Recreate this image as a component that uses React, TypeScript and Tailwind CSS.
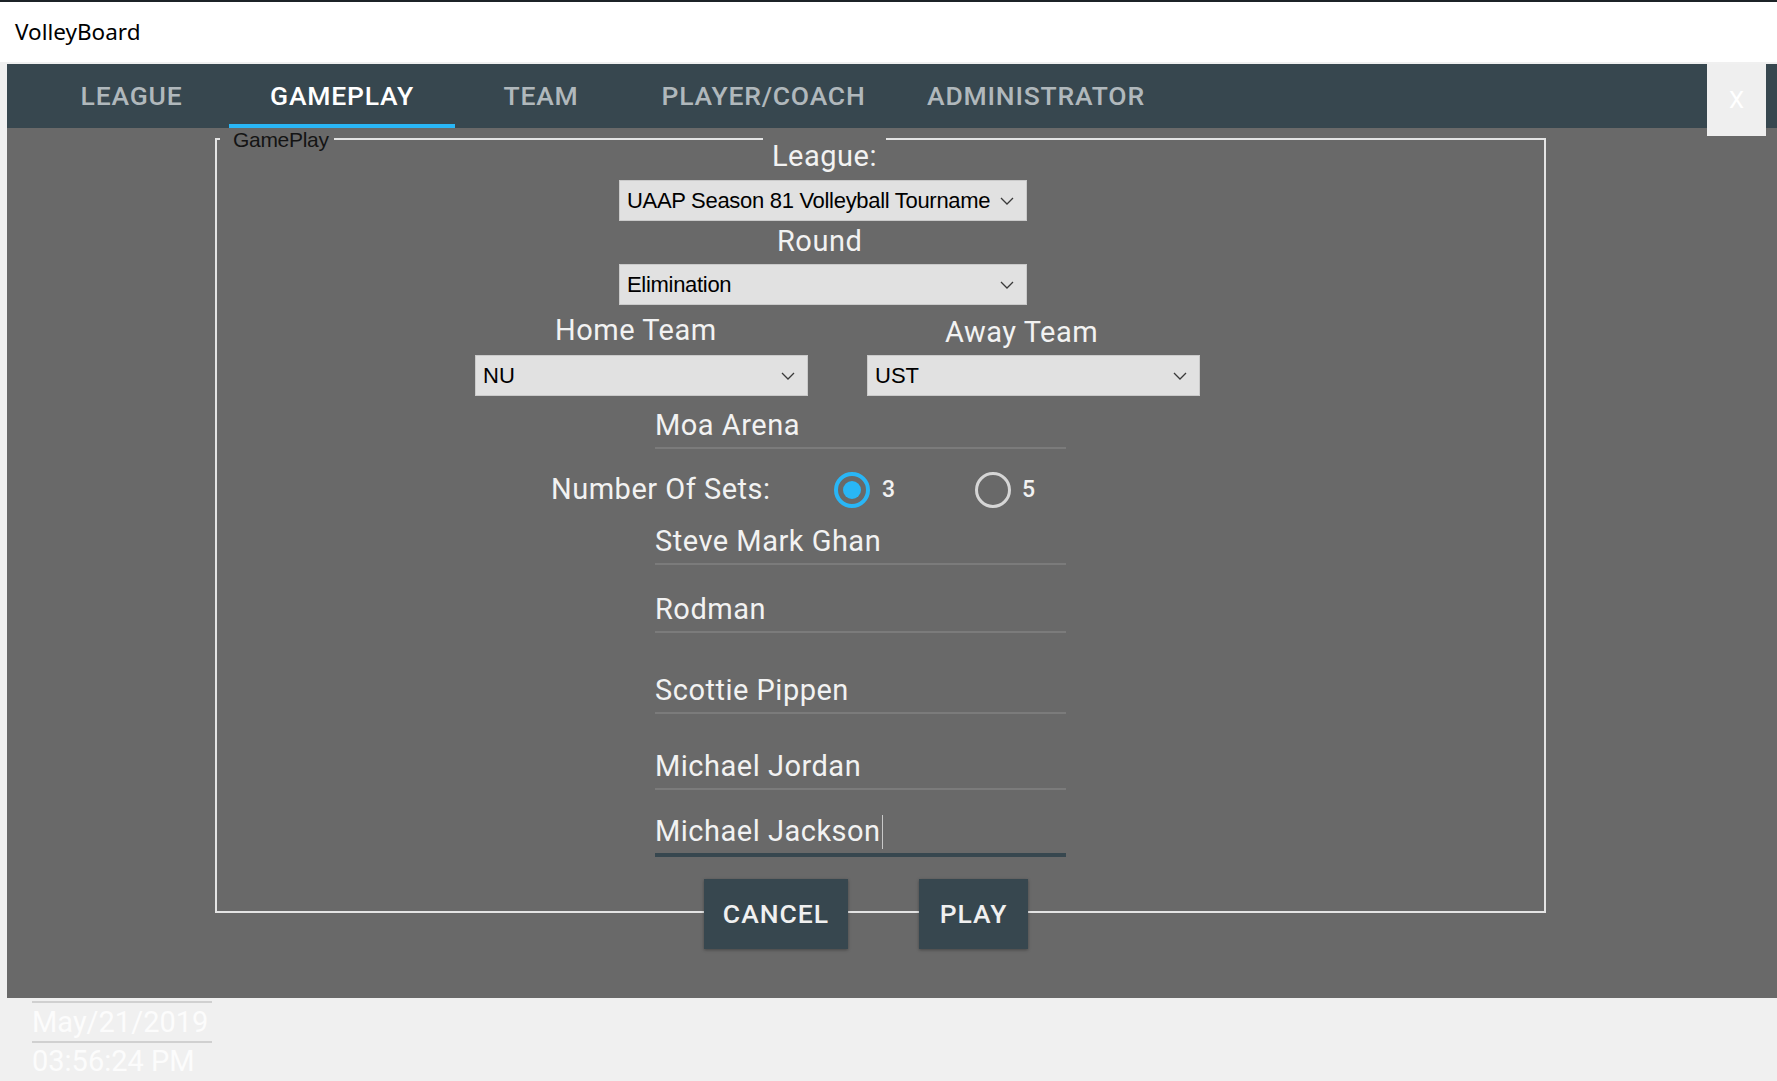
import React from "react";

function Chevron() {
  return (
    <svg width="14" height="8" viewBox="0 0 14 8" className="shrink-0">
      <path d="M1 1 L7 7 L13 1" fill="none" stroke="#3a3a3a" strokeWidth="1.3" />
    </svg>
  );
}

function Field({ text }: { text: string }) {
  return (
    <div className="ml-[438px] w-[411px] h-[45px] border-b-2 border-[#7b7b7b] text-[29px] tracking-[0.5px] leading-[43px] text-[#f2f2f2] whitespace-nowrap">
      {text}
    </div>
  );
}

export default function App() {
  const tabs = [
    { label: "LEAGUE", w: "w-[195px]", active: false },
    { label: "GAMEPLAY", w: "w-[226px]", active: true },
    { label: "TEAM", w: "w-[172px]", active: false },
    { label: "PLAYER/COACH", w: "w-[273px]", active: false },
    { label: "ADMINISTRATOR", w: "w-[272px]", active: false },
  ];
  return (
    <div className="w-[1777px] h-[1081px] bg-[#f0f0f0] flex flex-col overflow-hidden font-['Roboto',sans-serif]">
      <div className="h-[2px] bg-[#1c2327] shrink-0" />
      <div className="h-[60px] bg-white flex items-center pl-[15px] shrink-0">
        <span className="text-[22.5px] text-black font-['Noto_Sans',sans-serif]">VolleyBoard</span>
      </div>
      <div className="h-[2px] shrink-0" />
      <div className="ml-[7px] h-[934px] flex flex-col shrink-0 relative">
        <div className="h-[64px] bg-[#37474f] flex pl-[27px] shrink-0">
          {tabs.map((t) => (
            <div key={t.label} className={`${t.w} h-full relative flex items-center justify-center`}>
              <span
                className={`text-[26.5px] font-medium tracking-[0.8px] ${t.active ? "text-white" : "text-[#b0b8bc]"}`}
              >
                {t.label}
              </span>
              {t.active && <div className="absolute left-0 right-0 bottom-0 h-[4px] bg-[#29b6f6]" />}
            </div>
          ))}
        </div>
        <div className="absolute left-[1700px] top-0 w-[59px] h-[72px] bg-[#efefef] flex items-center justify-center text-white text-[24px]">
          X
        </div>
        <div className="flex-1 bg-[#696969] pt-[10px] pl-[208px]">
          <div className="relative w-[1331px] h-[775px] border-2 border-[#e4e4e4]">
            <div className="absolute left-[3px] top-[-12px] h-[24px] pl-[13px] pr-[5px] bg-[#696969] text-[21px] leading-[24px] text-[#141414] font-['Liberation_Sans',sans-serif] tracking-[-0.3px]">
              GamePlay
            </div>

            <div className="mt-[-7px] ml-[546px] w-[123px] h-[46px] pl-[9px] bg-[#696969] text-[29px] tracking-[0.5px] leading-[46px] text-[#f2f2f2]">
              League:
            </div>

            <div className="mt-[1px] ml-[402px] w-[408px] h-[41px] bg-[#e1e1e1] border border-[#cacaca] flex items-center justify-between pl-[7px] pr-[12px]">
              <span className="text-[22px] text-black font-['Liberation_Sans',sans-serif] whitespace-nowrap overflow-hidden tracking-[-0.3px]">
                UAAP Season 81 Volleyball Tourname
              </span>
              <Chevron />
            </div>

            <div className="mt-[3px] ml-[560px] h-[34px] text-[29px] tracking-[0.5px] leading-[34px] text-[#f2f2f2]">Round</div>

            <div className="mt-[6px] ml-[402px] w-[408px] h-[41px] bg-[#e1e1e1] border border-[#cacaca] flex items-center justify-between pl-[7px] pr-[12px]">
              <span className="text-[22px] text-black font-['Liberation_Sans',sans-serif] tracking-[-0.3px]">Elimination</span>
              <Chevron />
            </div>

            <div className="mt-[8px] flex">
              <div className="ml-[258px] flex flex-col">
                <div className="h-[34px] pl-[80px] text-[29px] tracking-[0.5px] leading-[34px] text-[#f2f2f2]">Home Team</div>
                <div className="mt-[8px] w-[333px] h-[41px] bg-[#e1e1e1] border border-[#cacaca] flex items-center justify-between pl-[7px] pr-[12px]">
                  <span className="text-[22px] text-black font-['Liberation_Sans',sans-serif]">NU</span>
                  <Chevron />
                </div>
              </div>
              <div className="ml-[59px] flex flex-col">
                <div className="mt-[2px] h-[34px] pl-[78px] text-[29px] tracking-[0.5px] leading-[34px] text-[#f2f2f2]">Away Team</div>
                <div className="mt-[6px] w-[333px] h-[41px] bg-[#e1e1e1] border border-[#cacaca] flex items-center justify-between pl-[7px] pr-[12px]">
                  <span className="text-[22px] text-black font-['Liberation_Sans',sans-serif]">UST</span>
                  <Chevron />
                </div>
              </div>
            </div>

            <div className="mt-[8px]">
              <Field text="Moa Arena" />
            </div>

            <div className="mt-[21px] ml-[334px] h-[40px] flex items-center">
              <span className="w-[283px] text-[29px] tracking-[0.5px] text-[#f2f2f2] whitespace-nowrap">Number Of Sets:</span>
              <div className="w-[36px] h-[36px] rounded-full border-[4px] border-[#29b6f6] flex items-center justify-center">
                <div className="w-[18px] h-[18px] rounded-full bg-[#29b6f6]" />
              </div>
              <span className="ml-[12px] w-[13px] text-[23px] font-medium text-[#f2f2f2]">3</span>
              <div className="ml-[80px] w-[36px] h-[36px] rounded-full border-[3px] border-[#d6d6d6]" />
              <span className="ml-[11px] text-[23px] font-medium text-[#f2f2f2]">5</span>
            </div>

            <div className="mt-[10px]">
              <Field text="Steve Mark Ghan" />
            </div>
            <div className="mt-[23px]">
              <Field text="Rodman" />
            </div>
            <div className="mt-[36px]">
              <Field text="Scottie Pippen" />
            </div>
            <div className="mt-[31px]">
              <Field text="Michael Jordan" />
            </div>
            <div className="mt-[20px] ml-[438px] w-[411px] h-[47px] border-b-4 border-[#37474f] text-[29px] tracking-[0.5px] leading-[43px] text-[#f2f2f2] flex items-center">
              <span>Michael Jackson</span>
              <span className="ml-[1px] w-[1px] h-[34px] bg-[#c8c8c8]" />
            </div>

            <div className="mt-[22px] flex">
              <div className="ml-[487px] w-[144px] h-[70px] bg-[#37474f] shadow-[0_1px_3px_rgba(0,0,0,0.35)] flex items-center justify-center text-[26.5px] font-medium tracking-[1px] text-[#f0f0f0]">
                CANCEL
              </div>
              <div className="ml-[71px] w-[109px] h-[70px] bg-[#37474f] shadow-[0_1px_3px_rgba(0,0,0,0.35)] flex items-center justify-center text-[26.5px] font-medium tracking-[1px] text-[#f0f0f0]">
                PLAY
              </div>
            </div>
          </div>
        </div>
      </div>
      <div className="flex-1 flex flex-col">
        <div className="mt-[3px] ml-[32px] w-[180px] h-[42px] border-y-2 border-[#d0d0d0] text-[29px] leading-[38px] text-[#fcfcfc] whitespace-nowrap">
          May/21/2019
        </div>
        <div className="ml-[32px] text-[29px] leading-[36px] text-[#fcfcfc] whitespace-nowrap">03:56:24 PM</div>
      </div>
    </div>
  );
}
